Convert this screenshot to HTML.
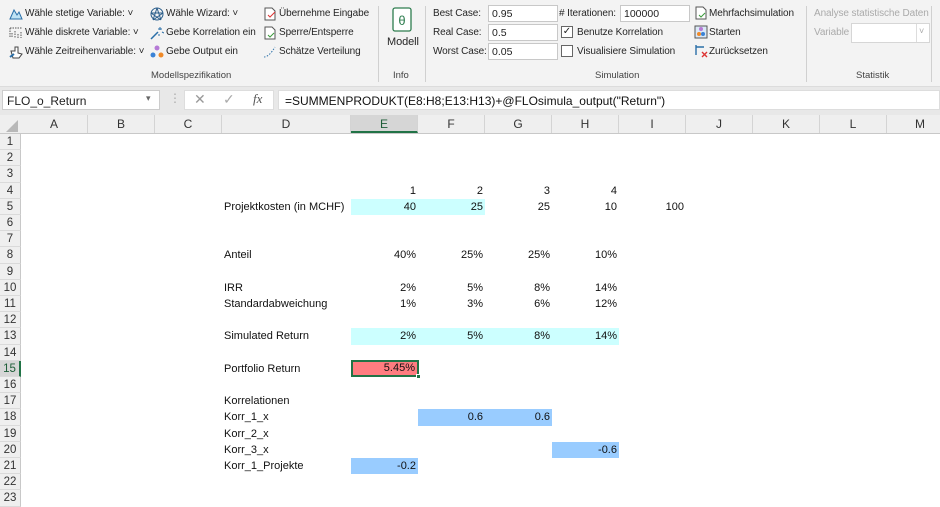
<!DOCTYPE html>
<html><head><meta charset="utf-8"><style>
*{margin:0;padding:0;box-sizing:border-box}
body{width:940px;height:497px;overflow:hidden;background:#fff;font-family:"Liberation Sans",sans-serif;position:relative;color:#222}
.a{position:absolute;white-space:nowrap}
.rb{font-size:10px;letter-spacing:-0.1px;color:#262626}
.ico{position:absolute;width:14px;height:14px}
.gl{font-size:9.5px;color:#444}
.sep{position:absolute;top:6px;width:1px;height:76px;background:#d0d0d0}
.inp{position:absolute;height:17px;background:#fff;border:1px solid #c8c8c8;font-size:10.5px;padding:2px 3px}
.ch{position:absolute;top:115px;height:18px;font-size:12px;color:#333;text-align:center;line-height:18px;border-right:1px solid #d4d4d4}
.rh{position:absolute;left:0;width:21px;height:16.2px;font-size:11.5px;color:#333;text-align:center;line-height:16px;background:#efefef;border-bottom:1px solid #dadada;border-right:1px solid #c8c8c8}
.c{position:absolute;height:16.2px;font-size:11px;line-height:16px;padding:0 2px;color:#111}
.r{text-align:right}
</style></head><body>
<div class="a" style="left:0;top:0;width:940px;height:87px;background:#f3f3f3;border-bottom:1px solid #dcdcdc"></div>
<svg class="ico" style="left:9px;top:7px" viewBox="0 0 14 14"><path d="M1 12 L5 3 L8 8 L10 5 L13 12 Z" fill="#bfe3f5" stroke="#2a6fa8"/></svg>
<div class="a rb" style="left:25px;top:8px">Wähle stetige Variable: ˅</div>
<svg class="ico" style="left:9px;top:26px" viewBox="0 0 14 14"><path d="M1 2h12M1 2v10M3 7v5M6 5v7M9 8v4M12 6v6" stroke="#555" stroke-dasharray="1.5 1" fill="none"/></svg>
<div class="a rb" style="left:25px;top:27px">Wähle diskrete Variable: ˅</div>
<svg class="ico" style="left:9px;top:45px" viewBox="0 0 14 14"><path d="M2 6h4V2h3v6l4 1-3 4H4z" fill="#fff" stroke="#444"/><path d="M1 12l4-3" stroke="#2a6fa8" stroke-width="2"/></svg>
<div class="a rb" style="left:25px;top:46px">Wähle Zeitreihenvariable: ˅</div>
<svg class="ico" style="left:150px;top:7px" viewBox="0 0 14 14"><circle cx="7" cy="7" r="6" fill="none" stroke="#2a5d8a"/><path d="M7 1L3 13M7 1l4 12M1 6h12M3 13l10-7M11 13L1 6" stroke="#2a5d8a" fill="none"/></svg>
<div class="a rb" style="left:166px;top:8px">Wähle Wizard: ˅</div>
<svg class="ico" style="left:150px;top:26px" viewBox="0 0 14 14"><path d="M1 13L8 6" stroke="#2a6fa8" stroke-width="1.5"/><path d="M10 1v3M8 3h4M12 6l2 1M9 8v2" stroke="#2a6fa8"/></svg>
<div class="a rb" style="left:166px;top:27px">Gebe Korrelation ein</div>
<svg class="ico" style="left:150px;top:45px" viewBox="0 0 14 14"><circle cx="7" cy="3" r="2.5" fill="#b57ad6"/><circle cx="3" cy="10" r="2.5" fill="#3b82d6"/><circle cx="11" cy="10" r="2.5" fill="#f08a28"/></svg>
<div class="a rb" style="left:166px;top:46px">Gebe Output ein</div>
<svg class="ico" style="left:263px;top:7px" viewBox="0 0 14 14"><path d="M2 1h7l3 3v9H2z" fill="#fff" stroke="#555"/><path d="M5 8l2 2 5-5" stroke="#d33" fill="none"/></svg>
<div class="a rb" style="left:279px;top:8px">Übernehme Eingabe</div>
<svg class="ico" style="left:263px;top:26px" viewBox="0 0 14 14"><path d="M2 1h7l3 3v9H2z" fill="#fff" stroke="#555"/><path d="M5 9l2 2 4-4" stroke="#3a9a3a" fill="none"/></svg>
<div class="a rb" style="left:279px;top:27px">Sperre/Entsperre</div>
<svg class="ico" style="left:263px;top:45px" viewBox="0 0 14 14"><path d="M1 12Q6 12 12 2" stroke="#2a6fa8" stroke-dasharray="1.5 1.5" fill="none"/></svg>
<div class="a rb" style="left:279px;top:46px">Schätze Verteilung</div>
<div class="a gl" style="left:151px;top:70px">Modellspezifikation</div>
<div class="sep" style="left:378px"></div>
<svg class="a" style="left:391px;top:7px" width="22" height="26" viewBox="0 0 22 26"><rect x="2" y="1" width="18" height="23" rx="2" fill="#fff" stroke="#2e7d4f" stroke-width="1.3"/><text x="11" y="18" font-size="13" text-anchor="middle" fill="#2e7d4f" font-family="Liberation Sans">θ</text></svg>
<div class="a rb" style="left:387px;top:36px;font-size:11px">Modell</div>
<div class="a gl" style="left:393px;top:70px">Info</div>
<div class="sep" style="left:425px"></div>
<div class="a rb" style="left:433px;top:8px">Best Case:</div>
<div class="a rb" style="left:433px;top:27px">Real Case:</div>
<div class="a rb" style="left:433px;top:46px">Worst Case:</div>
<div class="inp" style="left:488px;top:5px;width:70px">0.95</div>
<div class="inp" style="left:488px;top:24px;width:70px">0.5</div>
<div class="inp" style="left:488px;top:43px;width:70px">0.05</div>
<div class="a rb" style="left:559px;top:8px"># Iterationen:</div>
<div class="inp" style="left:620px;top:5px;width:70px">100000</div>
<div class="a" style="left:561px;top:26px;width:12px;height:12px;border:1px solid #666;background:#fff;font-size:10px;line-height:10px;text-align:center">✓</div>
<div class="a rb" style="left:577px;top:27px">Benutze Korrelation</div>
<div class="a" style="left:561px;top:45px;width:12px;height:12px;border:1px solid #666;background:#fff"></div>
<div class="a rb" style="left:577px;top:46px">Visualisiere Simulation</div>
<svg class="ico" style="left:694px;top:6px" viewBox="0 0 14 14"><path d="M2 1h7l3 3v9H2z" fill="#fff" stroke="#555"/><path d="M5 9l2 2 4-4" stroke="#3a9a3a" fill="none"/></svg>
<div class="a rb" style="left:709px;top:8px">Mehrfachsimulation</div>
<svg class="ico" style="left:694px;top:25px" viewBox="0 0 14 14"><rect x="1" y="1" width="12" height="12" fill="#dbe9f7" stroke="#555"/><circle cx="5" cy="9" r="2" fill="#f08a28"/><circle cx="9" cy="9" r="2" fill="#3b82d6"/><circle cx="7" cy="4" r="2" fill="#b57ad6"/></svg>
<div class="a rb" style="left:709px;top:27px">Starten</div>
<svg class="ico" style="left:694px;top:44px" viewBox="0 0 14 14"><path d="M2 1v10M2 3h8" stroke="#2a6fa8" stroke-width="1.4"/><path d="M8 8l5 5M13 8l-5 5" stroke="#d33" stroke-width="1.4"/></svg>
<div class="a rb" style="left:709px;top:46px">Zurücksetzen</div>
<div class="a gl" style="left:595px;top:70px">Simulation</div>
<div class="sep" style="left:806px"></div>
<div class="a rb" style="left:814px;top:8px;color:#aaa">Analyse statistische Daten</div>
<div class="a rb" style="left:814px;top:27px;color:#aaa">Variable</div>
<div class="inp" style="left:851px;top:23px;width:79px;height:20px;border-color:#d6d6d6"></div>
<div class="a" style="left:916px;top:24px;width:1px;height:18px;background:#ddd"></div>
<div class="a" style="left:919px;top:26px;font-size:9px;color:#aaa">˅</div>
<div class="a gl" style="left:856px;top:70px">Statistik</div>
<div class="sep" style="left:931px"></div>
<div class="a" style="left:0;top:87px;width:940px;height:28px;background:#e8e8e8"></div>
<div class="a" style="left:2px;top:90px;width:158px;height:20px;background:#fff;border:1px solid #ccc;font-size:12px;padding:3px 4px">FLO_o_Return</div>
<div class="a" style="left:146px;top:93px;font-size:9px;color:#666">▾</div>
<div class="a" style="left:169px;top:91px;font-size:12px;color:#aaa">⋮</div>
<div class="a" style="left:184px;top:90px;width:90px;height:20px;background:#fff;border:1px solid #ddd"></div>
<div class="a" style="left:194px;top:91px;font-size:14px;color:#999">✕</div>
<div class="a" style="left:223px;top:91px;font-size:14px;color:#aaa">✓</div>
<div class="a" style="left:253px;top:91px;font-size:13px;color:#555;font-family:'Liberation Serif',serif;font-style:italic">fx</div>
<div class="a" style="left:278px;top:90px;width:662px;height:20px;background:#fff;border:1px solid #ddd;font-size:12px;padding:3px 6px;color:#111">=SUMMENPRODUKT(E8:H8;E13:H13)+@FLOsimula_output("Return")</div>
<div class="a" style="left:0;top:115px;width:940px;height:19px;background:#efefef;border-bottom:1px solid #c8c8c8"></div>
<svg class="a" style="left:6px;top:120px" width="12" height="12"><path d="M12 0V12H0Z" fill="#b8b8b8"/></svg>
<div class="ch" style="left:21px;width:67px">A</div>
<div class="ch" style="left:88px;width:67px">B</div>
<div class="ch" style="left:155px;width:67px">C</div>
<div class="ch" style="left:222px;width:129px">D</div>
<div class="ch" style="left:351px;width:67px;background:#d6d6d6;border-bottom:2px solid #217346;color:#1e5e38">E</div>
<div class="ch" style="left:418px;width:67px">F</div>
<div class="ch" style="left:485px;width:67px">G</div>
<div class="ch" style="left:552px;width:67px">H</div>
<div class="ch" style="left:619px;width:67px">I</div>
<div class="ch" style="left:686px;width:67px">J</div>
<div class="ch" style="left:753px;width:67px">K</div>
<div class="ch" style="left:820px;width:67px">L</div>
<div class="ch" style="left:887px;width:67px">M</div>
<div class="rh" style="top:134px">1</div><div class="rh" style="top:150.2px">2</div><div class="rh" style="top:166.4px">3</div><div class="rh" style="top:182.6px">4</div><div class="rh" style="top:198.8px">5</div><div class="rh" style="top:215px">6</div><div class="rh" style="top:231.2px">7</div><div class="rh" style="top:247.4px">8</div><div class="rh" style="top:263.6px">9</div><div class="rh" style="top:279.8px">10</div><div class="rh" style="top:296px">11</div><div class="rh" style="top:312.2px">12</div><div class="rh" style="top:328.4px">13</div><div class="rh" style="top:344.6px">14</div><div class="rh" style="top:360.8px;background:#d6d6d6;color:#1e5e38;border-right:2px solid #217346">15</div><div class="rh" style="top:377px">16</div><div class="rh" style="top:393.2px">17</div><div class="rh" style="top:409.4px">18</div><div class="rh" style="top:425.6px">19</div><div class="rh" style="top:441.8px">20</div><div class="rh" style="top:458px">21</div><div class="rh" style="top:474.2px">22</div><div class="rh" style="top:490.4px">23</div>
<div class="c r" style="left:351px;top:182.6px;width:67px">1</div>
<div class="c r" style="left:418px;top:182.6px;width:67px">2</div>
<div class="c r" style="left:485px;top:182.6px;width:67px">3</div>
<div class="c r" style="left:552px;top:182.6px;width:67px">4</div>
<div class="c r" style="left:351px;top:198.8px;width:134px;background:#ccffff"></div>
<div class="c" style="left:222px;top:198.8px">Projektkosten (in MCHF)</div>
<div class="c r" style="left:351px;top:198.8px;width:67px">40</div>
<div class="c r" style="left:418px;top:198.8px;width:67px">25</div>
<div class="c r" style="left:485px;top:198.8px;width:67px">25</div>
<div class="c r" style="left:552px;top:198.8px;width:67px">10</div>
<div class="c r" style="left:619px;top:198.8px;width:67px">100</div>
<div class="c" style="left:222px;top:247.4px">Anteil</div>
<div class="c r" style="left:351px;top:247.4px;width:67px">40%</div>
<div class="c r" style="left:418px;top:247.4px;width:67px">25%</div>
<div class="c r" style="left:485px;top:247.4px;width:67px">25%</div>
<div class="c r" style="left:552px;top:247.4px;width:67px">10%</div>
<div class="c" style="left:222px;top:279.8px">IRR</div>
<div class="c r" style="left:351px;top:279.8px;width:67px">2%</div>
<div class="c r" style="left:418px;top:279.8px;width:67px">5%</div>
<div class="c r" style="left:485px;top:279.8px;width:67px">8%</div>
<div class="c r" style="left:552px;top:279.8px;width:67px">14%</div>
<div class="c" style="left:222px;top:296px">Standardabweichung</div>
<div class="c r" style="left:351px;top:296px;width:67px">1%</div>
<div class="c r" style="left:418px;top:296px;width:67px">3%</div>
<div class="c r" style="left:485px;top:296px;width:67px">6%</div>
<div class="c r" style="left:552px;top:296px;width:67px">12%</div>
<div class="c" style="left:222px;top:328.4px">Simulated Return</div>
<div class="c" style="left:351px;top:328.4px;width:268px;background:#ccffff"></div>
<div class="c r" style="left:351px;top:328.4px;width:67px">2%</div>
<div class="c r" style="left:418px;top:328.4px;width:67px">5%</div>
<div class="c r" style="left:485px;top:328.4px;width:67px">8%</div>
<div class="c r" style="left:552px;top:328.4px;width:67px">14%</div>
<div class="c" style="left:222px;top:360.8px">Portfolio Return</div>
<div class="c r" style="left:351px;top:360.3px;width:68px;height:17px;background:#ff7c80;border:2px solid #217346;line-height:13px">5.45%</div>
<div class="a" style="left:416px;top:374px;width:5px;height:5px;background:#217346;border:1px solid #fff"></div>
<div class="c" style="left:222px;top:393.2px">Korrelationen</div>
<div class="c" style="left:222px;top:409.4px">Korr_1_x</div>
<div class="c" style="left:418px;top:409.4px;width:134px;background:#99ccff"></div>
<div class="c r" style="left:418px;top:409.4px;width:67px">0.6</div>
<div class="c r" style="left:485px;top:409.4px;width:67px">0.6</div>
<div class="c" style="left:222px;top:425.6px">Korr_2_x</div>
<div class="c" style="left:222px;top:441.8px">Korr_3_x</div>
<div class="c r" style="left:552px;top:441.8px;width:67px;background:#99ccff">-0.6</div>
<div class="c" style="left:222px;top:458px">Korr_1_Projekte</div>
<div class="c r" style="left:351px;top:458px;width:67px;background:#99ccff">-0.2</div>
</body></html>
